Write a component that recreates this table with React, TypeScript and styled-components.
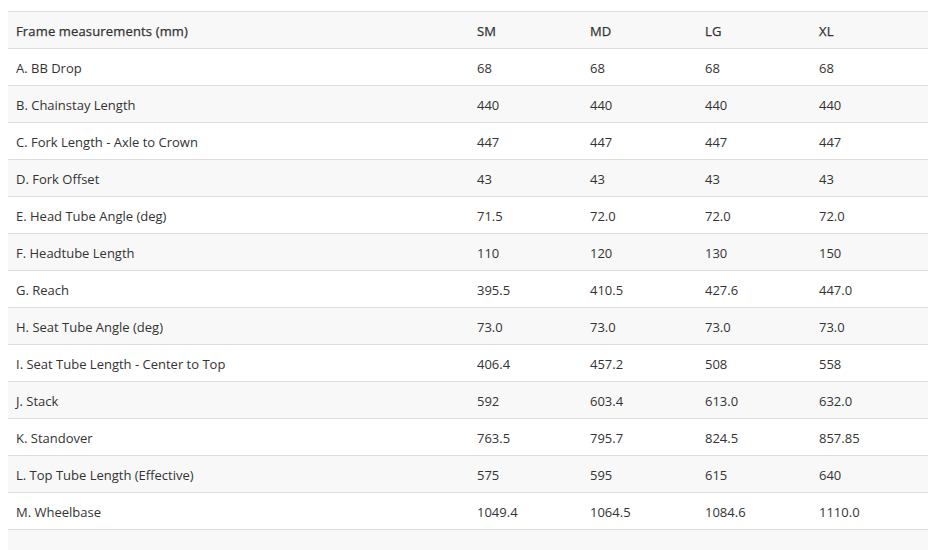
import React from "react";
import styled, { createGlobalStyle } from "styled-components";

const Global = createGlobalStyle`
  body {
    margin: 8px;
    background: #ffffff;
    font-family: "Open Sans", "Liberation Sans", sans-serif;
  }
`;

const Table = styled.table`
  width: 920px;
  margin-top: 3px;
  border-collapse: collapse;
  table-layout: fixed;
  font-size: 13px;
  color: #333333;
  border-top: 1px solid #dddddd;
`;

const Row = styled.tr<{ $shaded: boolean }>`
  height: 37px;
  background: ${(p) => (p.$shaded ? "#f8f8f8" : "#ffffff")};
  border-bottom: 1px solid #dddddd;
`;

const Cell = styled.td`
  padding: 2px 8px 0;
  vertical-align: middle;
  white-space: nowrap;
`;

const HeadCell = styled.th`
  padding: 2px 8px 0;
  text-align: left;
  font-weight: 500;
  letter-spacing: 0.15px;
  vertical-align: middle;
  white-space: nowrap;
  -webkit-text-stroke: 0.25px #333333;
`;

const sizes = ["SM", "MD", "LG", "XL"];
const widths = [461, 113, 115, 114, 117];

const rows: [string, string[]][] = [
  ["A. BB Drop", ["68", "68", "68", "68"]],
  ["B. Chainstay Length", ["440", "440", "440", "440"]],
  ["C. Fork Length - Axle to Crown", ["447", "447", "447", "447"]],
  ["D. Fork Offset", ["43", "43", "43", "43"]],
  ["E. Head Tube Angle (deg)", ["71.5", "72.0", "72.0", "72.0"]],
  ["F. Headtube Length", ["110", "120", "130", "150"]],
  ["G. Reach", ["395.5", "410.5", "427.6", "447.0"]],
  ["H. Seat Tube Angle (deg)", ["73.0", "73.0", "73.0", "73.0"]],
  ["I. Seat Tube Length - Center to Top", ["406.4", "457.2", "508", "558"]],
  ["J. Stack", ["592", "603.4", "613.0", "632.0"]],
  ["K. Standover", ["763.5", "795.7", "824.5", "857.85"]],
  ["L. Top Tube Length (Effective)", ["575", "595", "615", "640"]],
  ["M. Wheelbase", ["1049.4", "1064.5", "1084.6", "1110.0"]],
  ["", ["", "", "", ""]],
];

export default function App() {
  return (
    <>
      <Global />
      <Table>
        <colgroup>
          {widths.map((w, i) => (
            <col key={i} style={{ width: w }} />
          ))}
        </colgroup>
        <thead>
          <Row $shaded>
            <HeadCell>Frame measurements (mm)</HeadCell>
            {sizes.map((s) => (
              <HeadCell key={s}>{s}</HeadCell>
            ))}
          </Row>
        </thead>
        <tbody>
          {rows.map(([label, vals], i) => (
            <Row key={i} $shaded={i % 2 === 1}>
              <Cell>{label}</Cell>
              {vals.map((v, j) => (
                <Cell key={j}>{v}</Cell>
              ))}
            </Row>
          ))}
        </tbody>
      </Table>
    </>
  );
}
